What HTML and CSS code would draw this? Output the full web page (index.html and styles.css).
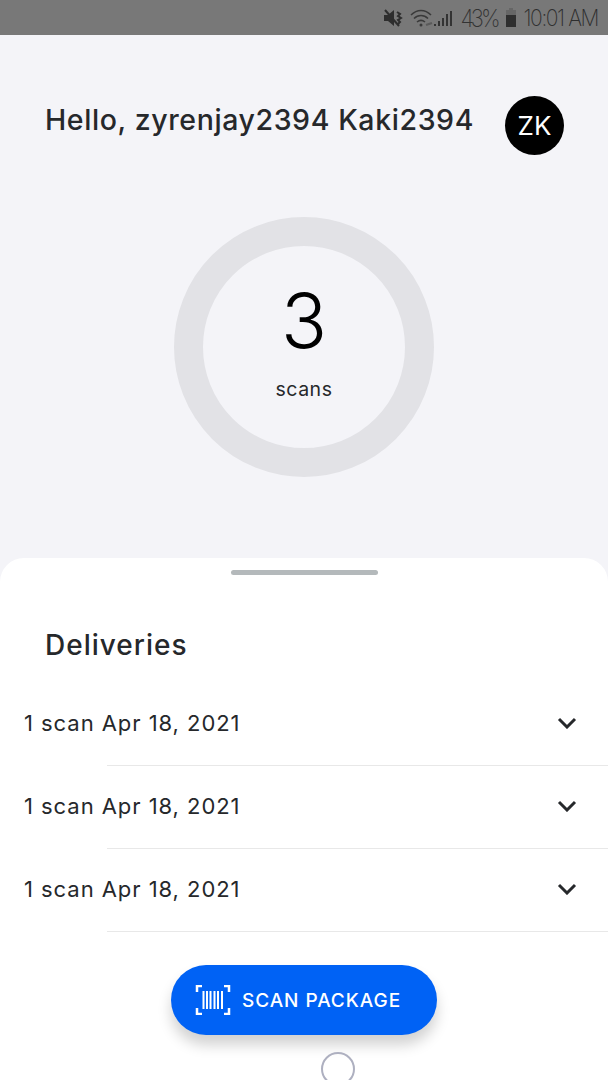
FILE: index.html
```html
<!DOCTYPE html>
<html lang="en">
<head>
<meta charset="utf-8">
<title>Deliveries</title>
<link rel="stylesheet" href="styles.css">
</head>
<body>
<div class="phone">
  <div class="status">
    <svg class="st-mute" width="22" height="20" viewBox="0 0 22 20"><path d="M1 7h4l6-5v16l-6-5H1z" fill="#2e2e2e"/><path d="M2 2l14 16" stroke="#2e2e2e" stroke-width="2"/><path d="M14 4l3 2-2 2 3 2-3 2 2 2-2 2" fill="none" stroke="#2e2e2e" stroke-width="2"/></svg>
    <svg class="st-wifi" width="24" height="18" viewBox="0 0 24 18"><path d="M1 6c6-6 14-6 20 0M4 9.500c4-4 10-4 14 0M7 13c2.500-2 5.500-2 8 0" fill="none" stroke="#3a3a3a" stroke-width="1.600"/><circle cx="11" cy="16" r="1.500" fill="#3a3a3a"/><path d="M16 16l6-2" stroke="#5a5a5a" stroke-width="2"/></svg>
    <svg class="st-signal" width="18" height="18" viewBox="0 0 18 18"><path d="M1 17v-2M5 17v-5M9 17v-8M13 17V5M17 17V2" stroke="#333" stroke-width="2"/></svg>
    <span class="st-pct">43%</span>
    <svg class="st-batt" width="12" height="19" viewBox="0 0 12 19"><path d="M4 0h4v2h3v17H1V2h3z" fill="#666"/><rect x="1" y="7" width="10" height="12" fill="#2e2e2e"/></svg>
    <span class="st-time">10:01 AM</span>
  </div>

  <main class="home">
    <header class="greeting">
      <h1 class="hello">Hello, zyrenjay2394 Kaki2394</h1>
      <div class="avatar">ZK</div>
    </header>
    <section class="ring-wrap">
      <div class="ring">
        <div class="count">3</div>
        <div class="count-label">scans</div>
      </div>
    </section>
  </main>

  <section class="sheet">
    <div class="handle"></div>
    <h2 class="sheet-title">Deliveries</h2>
    <ul class="list">
      <li class="row">
        <span class="row-text">1 scan Apr 18, 2021</span>
        <svg class="chev" width="20" height="12" viewBox="0 0 20 12"><path d="M2 2l8 8 8-8" fill="none" stroke="#26282b" stroke-width="3"/></svg>
      </li>
      <li class="row">
        <span class="row-text">1 scan Apr 18, 2021</span>
        <svg class="chev" width="20" height="12" viewBox="0 0 20 12"><path d="M2 2l8 8 8-8" fill="none" stroke="#26282b" stroke-width="3"/></svg>
      </li>
      <li class="row">
        <span class="row-text">1 scan Apr 18, 2021</span>
        <svg class="chev" width="20" height="12" viewBox="0 0 20 12"><path d="M2 2l8 8 8-8" fill="none" stroke="#26282b" stroke-width="3"/></svg>
      </li>
    </ul>
    <div class="cta-wrap">
      <button class="cta">
        <svg width="36" height="30" viewBox="0 0 36 30"><path d="M7 1H2v6M29 1h5v6M7 29H2v-6M29 29h5v-6" fill="none" stroke="#fff" stroke-width="2.500"/><path d="M8.500 6v18M12 6v18M15.500 6v18M19.500 6v18M23 6v18M27 6v18" stroke="#fff" stroke-width="2"/></svg>
        <span>SCAN PACKAGE</span>
      </button>
    </div>
  </section>
  <div class="home-key"></div>
</div>
</body>
</html>
```
FILE: styles.css
```css
* { box-sizing: border-box; }
html, body { margin: 0; padding: 0; }
body { font-family: "Inter", "Liberation Sans", sans-serif; background: #f4f4f8; }
.phone { position: relative; width: 608px; height: 1080px; overflow: hidden; display: flex; flex-direction: column; background: #f4f4f8; }

.status { height: 35px; flex: none; background: #787878; display: flex; align-items: center; justify-content: flex-end; padding-right: 10px; color: #333; }
.st-mute { margin-right: 5px; }
.st-signal { margin-right: 8px; }
.st-pct { font-family: "Inter", sans-serif; font-size: 22px; font-weight: 200; letter-spacing: -3px; color: #333; margin-right: 7px; transform: scaleY(1.1); }
.st-batt { margin-right: 7px; }
.st-time { font-family: "Inter", sans-serif; font-size: 21px; font-weight: 200; letter-spacing: -1.4px; color: #2e2e2e; transform: scaleY(1.1); }

.home { height: 523px; flex: none; display: flex; flex-direction: column; }
.greeting { display: flex; align-items: center; justify-content: space-between; padding: 61px 44px 0 45px; }
.hello { margin: 0 0 12px; font-size: 28.500px; font-weight: 500; color: #26282b; white-space: nowrap; letter-spacing: 0.600px; }
.avatar { width: 59px; height: 59px; border-radius: 50%; background: #000; color: #fff; font-size: 26px; display: flex; align-items: center; justify-content: center; }

.ring-wrap { display: flex; justify-content: center; padding-top: 62px; }
.ring { width: 260px; height: 260px; border-radius: 50%; border: 29px solid #e2e2e6; display: flex; flex-direction: column; align-items: center; }
.count { font-size: 76px; font-weight: 300; color: #000; line-height: 92px; margin-top: 28px; }
.count-label { font-size: 19.500px; color: #26282b; line-height: 24px; margin-top: 11px; letter-spacing: 0.500px; }

.sheet { flex: 1; background: #fff; border-radius: 24px 24px 0 0; display: flex; flex-direction: column; }
.handle { width: 147px; height: 5px; border-radius: 3px; background: #b4b9bb; margin: 12px auto 0; flex: none; }
.sheet-title { margin: 0; padding: 54px 0 0 45px; font-size: 28px; line-height: 32px; font-weight: 500; color: #26282b; letter-spacing: 1px; }
.list { list-style: none; margin: 22px 0 0; padding: 0; }
.row { position: relative; height: 83px; display: flex; align-items: center; justify-content: space-between; padding: 0 31px 0 24px; }
.row::after { content: ""; position: absolute; left: 107px; right: 0; bottom: 0; height: 1px; background: #e8e8e8; }
.row-text { font-size: 22px; color: #26282b; letter-spacing: 0.950px; margin-bottom: 4px; }
.chev { margin-bottom: 4px; }
.cta-wrap { display: flex; justify-content: center; padding-top: 33px; }
.cta { width: 266px; height: 70px; border: 0; border-radius: 35px; background: #0062f5; color: #fff; display: flex; align-items: center; gap: 11px; padding: 0 0 0 24px; font: 500 19px "Inter", "Liberation Sans", sans-serif; letter-spacing: 0.950px; box-shadow: 0 10px 14px rgba(0, 0, 0, 0.18); }
.home-key { position: absolute; left: 321px; top: 1052px; width: 34px; height: 34px; border-radius: 50%; border: 2px solid #aeb0c0; }
```
